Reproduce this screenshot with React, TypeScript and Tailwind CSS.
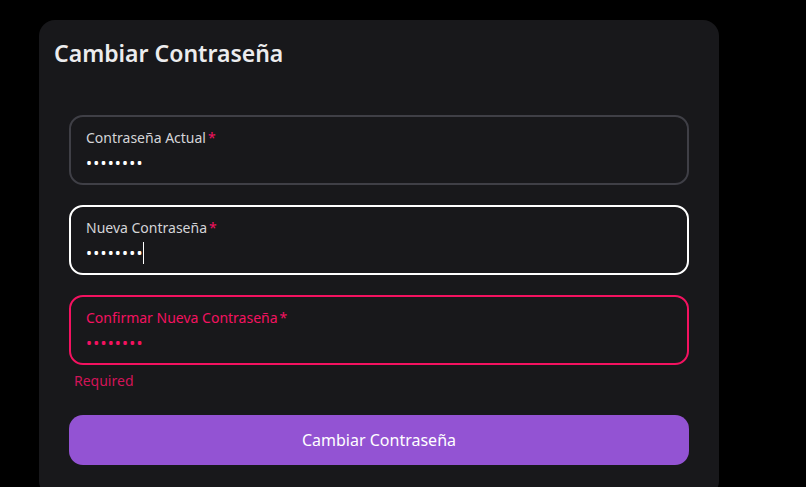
import React from "react";

type FieldProps = {
  label: string;
  tone: "default" | "focus" | "error";
  caret?: boolean;
};

const Field: React.FC<FieldProps> = ({ label, tone, caret }) => {
  const border =
    tone === "focus"
      ? "border-white"
      : tone === "error"
      ? "border-[#f31260]"
      : "border-[#3f3f46]";
  const labelColor = tone === "error" ? "text-[#f31260]" : "text-[#d4d4d8]";
  const dotColor = tone === "error" ? "text-[#f31260]" : "text-white";

  return (
    <div
      className={`h-[70px] rounded-[14px] border-2 ${border} px-[15px] pt-[11px] flex flex-col`}
    >
      <div className={`text-sm leading-5 ${labelColor}`}>
        {label}
        <span className="text-[#f31260] ml-[2px]">*</span>
      </div>
      <div className={`flex items-center h-[20px] mt-[5px] ${dotColor}`}>
        <span className="text-[16px] tracking-[1.2px] leading-none">••••••••</span>
        {caret && <span className="w-px h-[22px] bg-white -ml-[1px]" />}
      </div>
    </div>
  );
};

export default function App() {
  return (
    <div
      className="min-h-screen bg-black pt-5 pl-[39px]"
      style={{ fontFamily: '"Noto Sans", "Open Sans", sans-serif' }}
    >
      <div className="w-[680px] rounded-2xl bg-[#18181b] pb-8">
        <div className="px-[15px] pt-[17px]">
          <h2 className="text-[23px] leading-8 font-semibold text-[#ececee]">
            Cambiar Contraseña
          </h2>
        </div>
        <div className="px-[30px] pt-[46px] flex flex-col">
          <div className="flex flex-col gap-5">
            <Field label="Contraseña Actual" tone="default" />
            <Field label="Nueva Contraseña" tone="focus" caret />
            <div>
              <Field label="Confirmar Nueva Contraseña" tone="error" />
              <div className="pl-[5px] pt-[6px] text-sm leading-5 text-[#d21458]">
                Required
              </div>
            </div>
          </div>
          <button className="mt-6 h-[50px] rounded-[14px] bg-[#9353d3] text-white text-base">
            Cambiar Contraseña
          </button>
        </div>
      </div>
    </div>
  );
}
